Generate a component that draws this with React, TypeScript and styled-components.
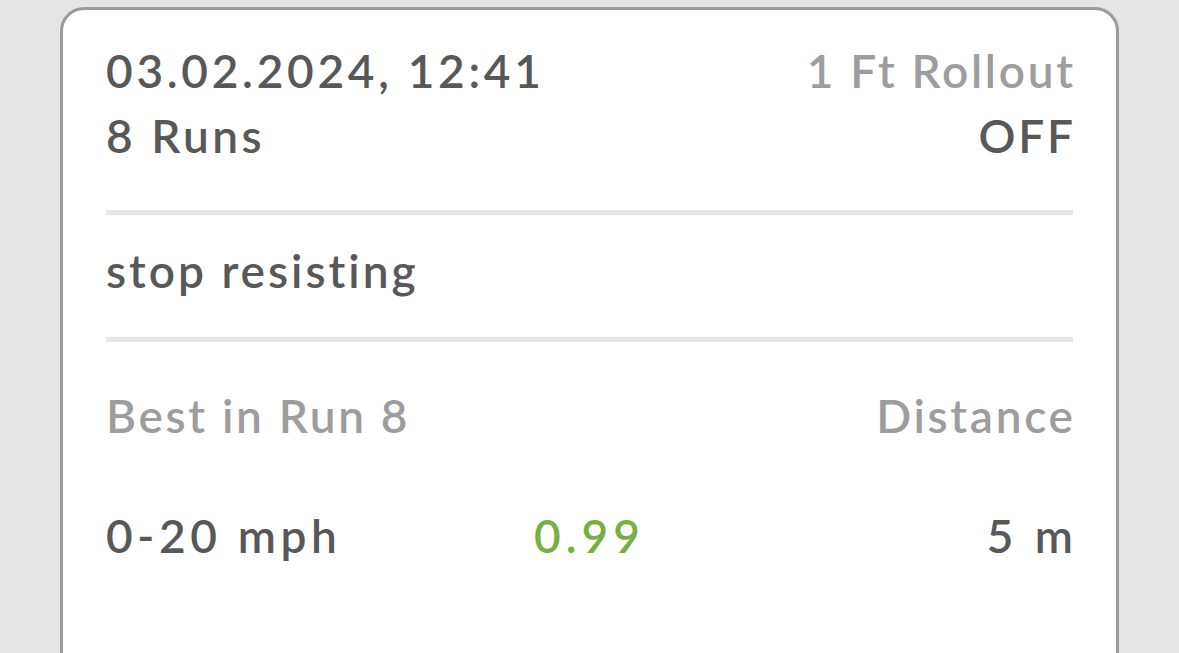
import styled, { createGlobalStyle } from "styled-components";

const GlobalStyle = createGlobalStyle`
  html, body {
    margin: 0;
    padding: 0;
    background: #e5e5e5;
  }
  body {
    font-family: Lato, "Noto Sans", sans-serif;
    -webkit-font-smoothing: antialiased;
  }
`;

const Page = styled.div`
  height: 653px;
  overflow: hidden;
  padding: 7px 60px 0;
  box-sizing: border-box;
  background: #e5e5e5;
`;

const Card = styled.div`
  background: #fff;
  border: 3px solid #9b9b9b;
  border-radius: 24px;
  padding: 28px 43px 0;
  min-height: 700px;
  box-sizing: border-box;
`;

const Row = styled.div`
  display: flex;
  justify-content: space-between;
  align-items: baseline;
`;

const StatRow = styled.div`
  display: grid;
  grid-template-columns: 1fr auto 1fr;
  align-items: baseline;
  margin-top: ${(p: { $gap?: number }) => p.$gap ?? 0}px;
`;

type TextProps = {
  $tone?: "dark" | "muted" | "good";
  $align?: "left" | "right";
  $track?: number;
};

const Text = styled.span<TextProps>`
  font-size: 46px;
  line-height: 65px;
  font-weight: 600;
  letter-spacing: ${(p) => p.$track ?? 2.7}px;
  font-variant-numeric: tabular-nums;
  white-space: nowrap;
  text-align: ${(p) => p.$align ?? "left"};
  color: ${(p) =>
    p.$tone === "muted" ? "#9d9d9d" : p.$tone === "good" ? "#76b041" : "#585858"};

  /* trailing tracking would push right-aligned text off the edge */
  &:last-child:not(:first-child) {
    margin-right: -${(p) => p.$track ?? 2.7}px;
  }
`;

const Divider = styled.hr<{ $top: number }>`
  border: none;
  height: 5px;
  margin: ${(p) => p.$top}px 0 0;
  background: #e6e6e6;
`;

const Note = styled.div`
  padding-top: 23px;
`;

export default function App() {
  return (
    <>
      <GlobalStyle />
      <Page>
        <Card>
          <Row>
            <Text $track={3.7}>03.02.2024, 12:41</Text>
            <Text $tone="muted">1 Ft Rollout</Text>
          </Row>
          <Row>
            <Text $track={3.5}>8 Runs</Text>
            <Text>OFF</Text>
          </Row>
          <Divider $top={42} />
          <Note>
            <Text $track={3}>stop resisting</Text>
          </Note>
          <Divider $top={34} />
          <StatRow $gap={41}>
            <Text $tone="muted">Best in Run 8</Text>
            <span />
            <Text $tone="muted" $align="right">Distance</Text>
          </StatRow>
          <StatRow $gap={55}>
            <Text $track={4.6}>0-20 mph</Text>
            <Text $tone="good" $track={5}>0.99</Text>
            <Text $align="right" $track={5}>5 m</Text>
          </StatRow>
        </Card>
      </Page>
    </>
  );
}
